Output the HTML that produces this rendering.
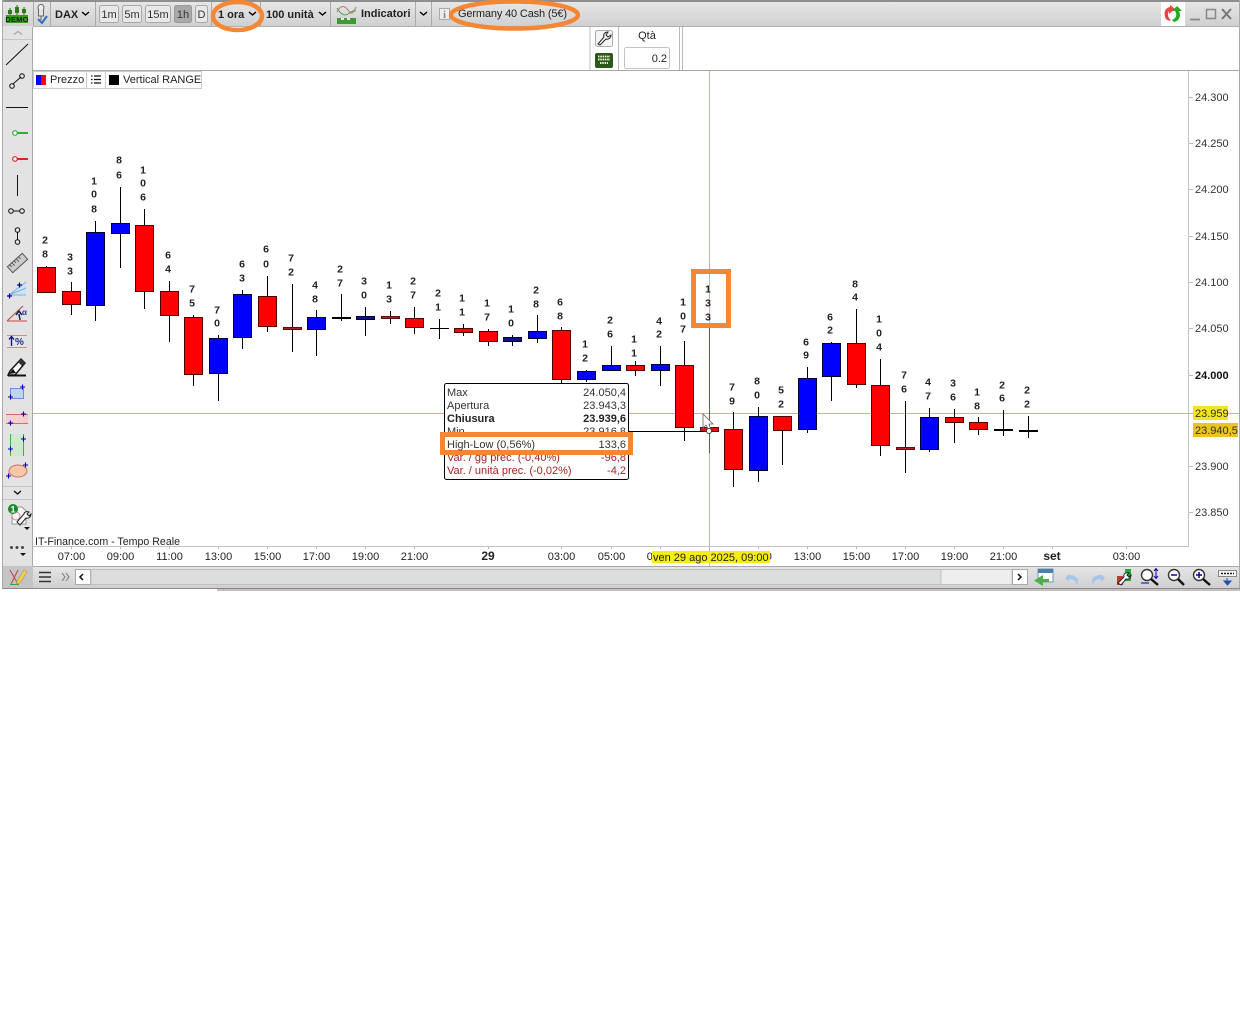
<!DOCTYPE html>
<html><head><meta charset="utf-8"><title>DAX</title>
<style>
html,body{margin:0;padding:0;background:#fff;width:1240px;height:1013px;overflow:hidden}
svg{display:block;font-family:"Liberation Sans",Arial,sans-serif;font-size:11px;fill:#222}
.b{font-weight:bold}
.w{stroke:#000;stroke-width:1;fill:none}
.R{fill:#f00;stroke:#500;stroke-width:1}
.B{fill:#00f;stroke:#003;stroke-width:1}
.F{fill:#a22;stroke:#511;stroke-width:1}
.N{fill:#118;stroke:#003;stroke-width:1}
.l text{font-size:10.5px;font-weight:bold;text-anchor:middle;fill:#222}
.t text{text-anchor:middle;fill:#222}
.p text{fill:#333}
.btn{fill:#e8e8e8;stroke:#a8a8a8}
.s{fill:none;stroke:#000}
</style></head><body>
<svg width="1240" height="1013" viewBox="0 0 1240 1013" xmlns="http://www.w3.org/2000/svg">
<defs>
<linearGradient id="g" x1="0" y1="0" x2="0" y2="1"><stop offset="0" stop-color="#e6e6e6"/><stop offset="1" stop-color="#cfd0d1"/></linearGradient>
</defs>
<rect width="1240" height="1013" fill="#fff"/>

<!-- bottom strip under window -->
<rect x="217" y="589" width="1023" height="2" fill="#c9bcbc"/>

<!-- chart area decorations -->
<path d="M33 70.5H1239" stroke="#aaa"/>
<path d="M1188.5 71V546M33 546.500H1189" stroke="#c4c4c4"/>
<line x1="33" y1="413.5" x2="1240" y2="413.5" stroke="#ee9f98" stroke-width="1"/>
<line x1="709.5" y1="71" x2="709.5" y2="566" stroke="#e5a79f" stroke-width="1"/>
<path d="M1189 97.5h4M1189 143.5h4M1189 189.5h4M1189 236.5h4M1189 282.5h4M1189 328.5h4M1189 375.5h4M1189 466.5h4M1189 512.5h4" stroke="#bbb"/>
<path d="M71.5 546v3M120.5 546v3M169.5 546v3M218.5 546v3M267.5 546v3M316.5 546v3M365.5 546v3M414.5 546v3M488.5 546v3M561.5 546v3M611.5 546v3M660.5 546v3M758.5 546v3M807.5 546v3M856.5 546v3M905.5 546v3M954.5 546v3M1003.5 546v3M1052.5 546v3M1126.5 546v3" stroke="#bbb"/>

<!-- wicks -->
<path class="w" d="M46.5 266V293M71.5 282V315M95.5 221V321M120.5 187V268M144.5 209V309M169.5 281V342M193.5 315V386M218.5 335V401M242.5 290V349M267.5 276V332M292.5 284V352M316.5 310V356M341.5 294V321M365.5 307V336M390.5 311V324M414.5 307V334M439.5 319V339M463.5 324V336M488.5 329V346M512.5 335V346M537.5 315V343M561.5 327V388M586.5 370V382M611.5 346V371M635.5 361V376M660.5 346V386M684.5 341V441M733.5 412V487M758.5 407V482M782.5 416V465M807.5 367V433M831.5 342V401M856.5 309V388M880.5 359V456M905.5 401V473M929.5 408V452M954.5 409V443M978.5 417V435M1003.5 410V436M1028.5 416V438"/>
<path d="M709.5 327V453" stroke="#8a4a4a"/>
<path d="M430 328.5H449" stroke="#000"/>

<!-- bodies -->
<rect class="R" x="37.5" y="267.5" width="18" height="25"/>
<rect class="R" x="62.5" y="291.5" width="18" height="13"/>
<rect class="B" x="86.5" y="232.5" width="18" height="73"/>
<rect class="B" x="111.5" y="223.5" width="18" height="10"/>
<rect class="R" x="135.5" y="225.5" width="18" height="66"/>
<rect class="R" x="160.5" y="291.5" width="18" height="24"/>
<rect class="R" x="184.5" y="317.5" width="18" height="57"/>
<rect class="B" x="209.5" y="338.5" width="18" height="35"/>
<rect class="B" x="233.5" y="294.5" width="18" height="43"/>
<rect class="R" x="258.5" y="296.5" width="18" height="30"/>
<rect class="F" x="283.5" y="327.5" width="18" height="2"/>
<rect class="B" x="307.5" y="317.5" width="18" height="12"/>
<rect x="332" y="317" width="19" height="2" fill="#000"/>
<rect class="N" x="356.5" y="316.5" width="18" height="3"/>
<rect class="F" x="381.5" y="316.5" width="18" height="2"/>
<rect class="R" x="405.5" y="318.5" width="18" height="9"/>
<rect class="R" x="454.5" y="328.5" width="18" height="4"/>
<rect class="R" x="479.5" y="331.5" width="18" height="10"/>
<rect class="N" x="503.5" y="337.5" width="18" height="4"/>
<rect class="B" x="528.5" y="331.5" width="18" height="7"/>
<rect class="R" x="552.5" y="330.5" width="18" height="49"/>
<rect class="B" x="577.5" y="371.5" width="18" height="8"/>
<rect class="B" x="602.5" y="365.5" width="18" height="5"/>
<rect class="R" x="626.5" y="365.5" width="18" height="5"/>
<rect class="B" x="651.5" y="364.5" width="18" height="6"/>
<rect class="R" x="675.5" y="365.5" width="18" height="62"/>
<rect class="F" x="700.5" y="427.5" width="18" height="4" style="fill:#d11"/>
<rect class="R" x="724.5" y="429.5" width="18" height="40"/>
<rect class="B" x="749.5" y="416.5" width="18" height="54"/>
<rect class="R" x="773.5" y="416.5" width="18" height="14"/>
<rect class="B" x="798.5" y="378.5" width="18" height="51"/>
<rect class="B" x="822.5" y="343.5" width="18" height="33"/>
<rect class="R" x="847.5" y="343.5" width="18" height="41"/>
<rect class="R" x="871.5" y="385.5" width="18" height="60"/>
<rect class="F" x="896.5" y="447.5" width="18" height="2"/>
<rect class="B" x="920.5" y="417.5" width="18" height="32"/>
<rect class="R" x="945.5" y="417.5" width="18" height="5"/>
<rect class="R" x="969.5" y="422.5" width="18" height="7"/>
<rect x="994" y="429" width="19" height="2" fill="#000"/>
<rect x="1019" y="430" width="19" height="2" fill="#000"/>

<!-- volume labels -->
<g class="l" transform="translate(0,-.7)">
<text x="45" y="244">2</text><text x="45" y="258">8</text>
<text x="70" y="261">3</text><text x="70" y="275">3</text>
<text x="94" y="185">1</text><text x="94" y="198">0</text><text x="94" y="213">8</text>
<text x="119" y="164">8</text><text x="119" y="179">6</text>
<text x="143" y="174">1</text><text x="143" y="187">0</text><text x="143" y="201">6</text>
<text x="168" y="259">6</text><text x="168" y="273">4</text>
<text x="192" y="293">7</text><text x="192" y="307">5</text>
<text x="217" y="314">7</text><text x="217" y="327">0</text>
<text x="242" y="268">6</text><text x="242" y="282">3</text>
<text x="266" y="253">6</text><text x="266" y="268">0</text>
<text x="291" y="262">7</text><text x="291" y="276">2</text>
<text x="315" y="289">4</text><text x="315" y="303">8</text>
<text x="340" y="273">2</text><text x="340" y="287">7</text>
<text x="364" y="285">3</text><text x="364" y="299">0</text>
<text x="389" y="289">1</text><text x="389" y="303">3</text>
<text x="413" y="285">2</text><text x="413" y="299">7</text>
<text x="438" y="297">2</text><text x="438" y="311">1</text>
<text x="462" y="302">1</text><text x="462" y="316">1</text>
<text x="487" y="307">1</text><text x="487" y="321">7</text>
<text x="511" y="313">1</text><text x="511" y="327">0</text>
<text x="536" y="294">2</text><text x="536" y="308">8</text>
<text x="560" y="306">6</text><text x="560" y="320">8</text>
<text x="585" y="348">1</text><text x="585" y="362">2</text>
<text x="610" y="324">2</text><text x="610" y="338">6</text>
<text x="634" y="343">1</text><text x="634" y="357">1</text>
<text x="659" y="325">4</text><text x="659" y="338">2</text>
<text x="683" y="306">1</text><text x="683" y="320">0</text><text x="683" y="333">7</text>
<text x="708" y="293">1</text><text x="708" y="307">3</text><text x="708" y="321">3</text>
<text x="732" y="391">7</text><text x="732" y="405">9</text>
<text x="757" y="385">8</text><text x="757" y="399">0</text>
<text x="781" y="394">5</text><text x="781" y="408">2</text>
<text x="806" y="346">6</text><text x="806" y="359">9</text>
<text x="830" y="321">6</text><text x="830" y="334">2</text>
<text x="855" y="288">8</text><text x="855" y="301">4</text>
<text x="879" y="323">1</text><text x="879" y="337">0</text><text x="879" y="351">4</text>
<text x="904" y="379">7</text><text x="904" y="393">6</text>
<text x="928" y="386">4</text><text x="928" y="400">7</text>
<text x="953" y="387">3</text><text x="953" y="401">6</text>
<text x="977" y="396">1</text><text x="977" y="410">8</text>
<text x="1002" y="389">2</text><text x="1002" y="402">6</text>
<text x="1027" y="394">2</text><text x="1027" y="408">2</text>
</g>

<!-- orange box around 133 -->
<rect x="693.5" y="271.5" width="35" height="54" fill="none" stroke="#f58634" stroke-width="5"/>

<!-- price axis -->
<g class="p">
<text x="1195" y="101">24.300</text><text x="1195" y="147">24.250</text><text x="1195" y="193">24.200</text>
<text x="1195" y="240">24.150</text><text x="1195" y="286">24.100</text><text x="1195" y="332">24.050</text>
<text x="1195" y="379" class="b" style="fill:#111">24.000</text><text x="1195" y="470">23.900</text><text x="1195" y="516">23.850</text>
</g>
<rect x="1193" y="406" width="35" height="14" fill="#f4e61c"/>
<text x="1195" y="417" fill="#333">23.959</text>
<rect x="1193" y="423" width="45" height="14" fill="#e9c51d"/>
<text x="1195" y="434" fill="#333">23.940,5</text>

<!-- time axis -->
<text x="35" y="545" fill="#222" textLength="145" lengthAdjust="spacingAndGlyphs">IT-Finance.com - Tempo Reale</text>
<g class="t">
<text x="71.5" y="560">07:00</text><text x="120.5" y="560">09:00</text><text x="169.5" y="560">11:00</text><text x="218.5" y="560">13:00</text>
<text x="267.5" y="560">15:00</text><text x="316.5" y="560">17:00</text><text x="365.5" y="560">19:00</text><text x="414.5" y="560">21:00</text>
<text x="488" y="560" class="b" style="font-size:12px">29</text><text x="561.5" y="560">03:00</text><text x="611.5" y="560">05:00</text><text x="660.5" y="560">07:00</text>
<text x="758.5" y="560">11:00</text><text x="807.5" y="560">13:00</text><text x="856.5" y="560">15:00</text><text x="905.5" y="560">17:00</text>
<text x="954.5" y="560">19:00</text><text x="1003.5" y="560">21:00</text><text x="1052" y="560" class="b" style="font-size:12px">set</text><text x="1126.5" y="560">03:00</text>
</g>
<rect x="652" y="551" width="118" height="12" fill="#f4ec14"/>
<text x="653" y="561" fill="#222">ven 29 ago 2025, 09:00</text>

<!-- tooltip -->
<path d="M628 431.5H704" stroke="#000"/>
<rect x="444.5" y="383.5" width="184" height="96" rx="2" fill="#fff" stroke="#000"/>
<text x="447" y="396" fill="#333">Max</text><text x="626" y="396" text-anchor="end" fill="#333">24.050,4</text>
<text x="447" y="409" fill="#333">Apertura</text><text x="626" y="409" text-anchor="end" fill="#333">23.943,3</text>
<text x="447" y="422" class="b">Chiusura</text><text x="626" y="422" text-anchor="end" class="b">23.939,6</text>
<text x="447" y="435" fill="#333">Min</text><text x="626" y="435" text-anchor="end" fill="#333">23.916,8</text>
<text x="447" y="461" style="fill:#a22">Var. / gg prec. (-0,40%)</text><text x="626" y="461" text-anchor="end" style="fill:#a22">-96,8</text>
<text x="447" y="474" style="fill:#a22">Var. / unità prec. (-0,02%)</text><text x="626" y="474" text-anchor="end" style="fill:#a22">-4,2</text>
<rect x="442.5" y="434.5" width="188" height="18" fill="#fff" stroke="#f58634" stroke-width="5"/>
<text x="447" y="448" fill="#333">High-Low (0,56%)</text><text x="626" y="448" text-anchor="end" fill="#333">133,6</text>

<!-- cursor -->
<path d="M703 414V428L706 425L709 431L711 430L709 424L713 424Z" fill="#fff" stroke="#666" stroke-width=".8"/>
<circle cx="709" cy="431" r="2.5" fill="#fff" stroke="#444"/>

<!-- legend -->
<rect x="33.5" y="71.5" width="168" height="17" fill="#fff" stroke="#ccc"/>
<path d="M86.5 71V88M105.5 71V88" stroke="#ccc"/>
<rect x="36" y="75" width="5" height="10" fill="#00f"/><rect x="41" y="75" width="5" height="10" fill="#f00"/>
<text x="50" y="83" fill="#222">Prezzo</text>
<path d="M94 76h7M94 79.5h7M94 83h7" stroke="#111" stroke-width="1.3"/>
<path d="M91 76h1.5M91 79.5h1.5M91 83h1.5" stroke="#111" stroke-width="1.3"/>
<rect x="109" y="75" width="10" height="10" fill="#000"/>
<text x="123" y="83" fill="#222">Vertical RANGE</text>

<!-- order panel -->
<path d="M590 27V70M618.5 27V70M679.5 27V70M682.5 27V70" stroke="#bbb"/>
<rect x="595.5" y="30.5" width="17" height="16" rx="2" fill="#f4f4f4" stroke="#aaa"/>
<path d="M598 44L604 37C603 34 605 32 608 32L606 35L608 37L611 35C611 38 608 40 606 39L600 45Z" fill="#fff" stroke="#222"/>
<rect x="595" y="53" width="18" height="15" rx="2" fill="#2b5a16"/>
<path d="M598 56.500h12M598 59.500h12M600 63h8" stroke="#fff" stroke-width="1.800" stroke-dasharray="1.500 .8"/>
<text x="647" y="39" text-anchor="middle" fill="#222">Qtà</text>
<rect x="624.5" y="47.5" width="45" height="21" rx="2" fill="#fff" stroke="#c4c4c4"/>
<text x="667" y="62" text-anchor="end" fill="#222">0.2</text>

<!-- top toolbar -->
<rect x="2" y="0" width="1238" height="2" fill="#8e8e8e"/>
<rect x="2" y="2" width="1238" height="24" fill="url(#g)"/>
<path d="M2 26.5H1240" stroke="#b0b0b0"/>
<path d="M33.5 2V26M50.5 2V26M95.5 2V26M211.5 2V26M260.5 2V26M330.5 2V26M415.5 2V26M431.5 2V26" stroke="#aaa"/>
<!-- demo icon -->
<rect x="6" y="15" width="22" height="8" fill="#3c9a1e"/>
<text x="17" y="22" text-anchor="middle" style="font-size:7.5px;font-weight:bold;letter-spacing:.2px;fill:#0d2a05">DEMO</text>
<path d="M10 8V15M17 5V15M24 7V15" stroke="#2a6a15"/>
<rect x="8" y="10" width="4" height="4" fill="#2e7a18"/><rect x="15" y="7" width="4" height="6" fill="#2e7a18"/><rect x="22" y="9" width="4" height="4" fill="#2e7a18"/>
<!-- pin -->
<circle cx="41" cy="7.500" r="3" fill="#eee" stroke="#666"/>
<path d="M38.500 9V16H43.500V9M41 16V20" fill="#e4e4e4" stroke="#666"/>
<path d="M38 19L42 23L47 16" fill="none" stroke="#2f6fc0" stroke-width="2"/>
<text x="55" y="18" class="b" style="fill:#222">DAX</text>
<path d="M82 12L85.500 15L89 12" class="s" stroke-width="1.4"/>
<rect class="btn" x="99.500" y="5.500" width="19" height="17" rx="2"/><text x="109" y="18" text-anchor="middle" fill="#333">1m</text>
<rect class="btn" x="122.500" y="5.500" width="19" height="17" rx="2"/><text x="132" y="18" text-anchor="middle" fill="#333">5m</text>
<rect class="btn" x="145.500" y="5.500" width="25" height="17" rx="2"/><text x="158" y="18" text-anchor="middle" fill="#333">15m</text>
<rect x="174.500" y="5.500" width="17" height="17" rx="2" fill="#a9a9a9" stroke="#999"/><text x="183" y="18" text-anchor="middle" fill="#333">1h</text>
<rect class="btn" x="195.500" y="5.500" width="12" height="17" rx="2"/><text x="201.500" y="18" text-anchor="middle" fill="#333">D</text>
<text x="218" y="18" class="b" style="fill:#222">1 ora</text>
<path d="M249 12L252.500 15L256 12" class="s" stroke-width="1.4"/>
<text x="266" y="18" class="b" style="fill:#222">100 unità</text>
<path d="M319 12L322.500 15L326 12" class="s" stroke-width="1.4"/>
<!-- indicator icon -->
<path d="M337 12C341 4 345 6 348 10C351 15 353 14 356 7" fill="none" stroke="#c87070"/>
<path d="M337 8C341 15 345 16 348 14C351 12 353 10 356 11" fill="none" stroke="#5a9a5a"/>
<rect x="337" y="18" width="19" height="6" fill="#3f9a2f"/>
<rect x="341" y="18" width="3" height="2" fill="#e8e8e8"/><rect x="347" y="18" width="3" height="2" fill="#e8e8e8"/>
<text x="361" y="17" class="b" style="fill:#222">Indicatori</text>
<path d="M420 12L423.500 15L427 12" class="s" stroke-width="1.4"/>
<rect x="439.500" y="8.500" width="10" height="11" fill="#eee" stroke="#aaa"/>
<text x="444.500" y="18" text-anchor="middle" class="b" style="font-family:'Liberation Serif',serif;fill:#888">i</text>
<text x="458" y="17" style="fill:#222" textLength="109">Germany 40 Cash (5€)</text>

<ellipse cx="237.500" cy="16" rx="24.500" ry="14" fill="none" stroke="#f58634" stroke-width="4.500"/>
<ellipse cx="514.500" cy="15" rx="63.500" ry="13.500" fill="none" stroke="#f58634" stroke-width="4.500"/>

<!-- window controls -->
<rect x="1161" y="2" width="24" height="24" fill="#fff"/>
<path d="M1170 7C1165 8 1163 13 1166 19C1168 21 1170 21 1171 20C1168 18 1167 14 1169 11V14L1175 9L1170 5Z" fill="#e44"/>
<path d="M1174 22C1180 21 1181 15 1179 11L1182 11L1177 6L1172 11H1175C1177 14 1177 18 1172 20Z" fill="#2a2"/>
<path d="M1190 19.500H1200" stroke="#888" stroke-width="1.800"/>
<rect x="1206.500" y="9.500" width="9" height="9" fill="none" stroke="#888" stroke-width="1.500"/>
<path d="M1222 9L1231 19M1231 9L1222 19" stroke="#777" stroke-width="2"/>

<!-- sidebar -->
<rect x="2" y="26" width="31" height="540" fill="#e3e3e3"/>
<path d="M2.500 0V588M32.500 27V566" stroke="#aaa"/>
<path d="M3 39.500H32M3 486.500H32M3 499.500H32" stroke="#c6c6c6"/>
<path d="M14 34.500L18 31.500L22 34.500" fill="none" stroke="#aaa" stroke-width="1.400"/>
<path d="M6 65L28 44" stroke="#111"/>
<path d="M13 84L21 77" stroke="#111"/><circle cx="12" cy="86" r="2.300" fill="none" stroke="#111"/><circle cx="22" cy="76" r="2.300" fill="none" stroke="#111"/>
<path d="M6 107.500H28" stroke="#111"/>
<circle cx="15" cy="133" r="2.300" fill="#fff" stroke="#3a3" stroke-width="1.200"/><path d="M17 133H28" stroke="#3a3" stroke-width="2"/>
<circle cx="15" cy="159" r="2.300" fill="#fff" stroke="#d22" stroke-width="1.200"/><path d="M17 159H28" stroke="#d22" stroke-width="2"/>
<path d="M17.500 175V196" stroke="#111"/>
<circle cx="11" cy="211" r="2.300" fill="none" stroke="#111"/><circle cx="22" cy="211" r="2.300" fill="none" stroke="#111"/><path d="M13 211H20" stroke="#111"/>
<circle cx="17.500" cy="230" r="2.300" fill="none" stroke="#111"/><circle cx="17.500" cy="242" r="2.300" fill="none" stroke="#111"/><path d="M17.500 232V240" stroke="#111"/>
<g transform="rotate(-42 17.500 263)"><rect x="7.500" y="259" width="20" height="8" fill="#ccc" stroke="#555"/><path d="M10.500 259v3M13.500 259v4M16.500 259v3M19.500 259v4M22.500 259v3" stroke="#555"/></g>
<path d="M9 295L26 282V295Z" fill="#cfe2f5"/><path d="M9 295L26 282M9 295L26 288M9 295H26" stroke="#7fb0e0"/>
<path d="M7 296h5M9.500 293.500v5M17 285h5M19.500 282.500v5" stroke="#00a" stroke-width="1.200"/>
<path d="M7 321L23 306M7 321H27" stroke="#c44" stroke-width="1.100" fill="none"/>
<path d="M20 320L19 314M16 315L19 311L22 315" fill="none" stroke="#125" stroke-width="1.500"/>
<text x="22" y="315" style="font-size:8px;fill:#33a;font-weight:bold">α</text>
<path d="M7 335.500H27M7 347.500H27" stroke="#d88"/>
<path d="M11.500 346V337M9 339.500L11.500 336.500L14 339.500" fill="none" stroke="#00a" stroke-width="1.300"/>
<text x="15" y="345" style="font-size:10px;font-weight:bold;fill:#238">%</text>
<path d="M10 371L21 359L25 363L15 375H8Z" fill="#fff" stroke="#111" stroke-width="1.400"/><path d="M18 362L22 366L25 363L21 359Z" fill="#333"/><path d="M8 375.500H26" stroke="#111" stroke-width="2"/><path d="M9 374L13 369L16 373Z" fill="#111"/>
<rect x="10.500" y="388.500" width="13" height="10" fill="#bfd3f2" stroke="#6c8fd4"/>
<path d="M8 397h5M10.500 394.500v5M20 387h5M22.500 384.500v5" stroke="#00a" stroke-width="1.100"/>
<rect x="6" y="414" width="22" height="10" fill="#f5cfcf"/><path d="M6 414.500H28M6 423.500H28" stroke="#d66"/>
<path d="M8 423h5M10.500 420.500v5M21 414h5M23.500 411.500v5" stroke="#00a" stroke-width="1.100"/>
<rect x="10" y="434" width="14" height="22" fill="#cfe9cf"/><path d="M10.500 434V456M23.500 434V456" stroke="#4a4"/>
<path d="M8 449h5M10.500 446.500v5M21 439h5M23.500 436.500v5" stroke="#00a" stroke-width="1.100"/>
<ellipse cx="18" cy="471" rx="9" ry="6" fill="#f6c8a8" stroke="#d66"/>
<path d="M6 476h5M8.500 473.500v5M23 465h5M25.500 462.500v5" stroke="#00a" stroke-width="1.100"/>
<path d="M14 491L17.500 494L21 491" fill="none" stroke="#111" stroke-width="1.400"/>
<path d="M12 507H22L26 511V524H12Z" fill="#f6f6f6" stroke="#999"/>
<circle cx="16" cy="516" r="4" fill="none" stroke="#d88"/>
<path d="M17 522L24 514C24 512 27 511 29 512L27 514L29 516L31 514C31 517 28 519 26 518L20 525Z" fill="#fff" stroke="#222"/>
<circle cx="13" cy="509" r="5" fill="#1a8a2a"/>
<text x="13" y="512.500" text-anchor="middle" style="font-size:9px;font-weight:bold;fill:#fff">1</text>
<path d="M24 527h6l-3 3Z" fill="#111"/>
<circle cx="11.500" cy="547.500" r="1.500" fill="#444"/><circle cx="17" cy="547.500" r="1.500" fill="#444"/><circle cx="22.500" cy="547.500" r="1.500" fill="#444"/>
<path d="M20 553h6l-3 3Z" fill="#111"/>

<!-- bottom bar -->
<rect x="33" y="566" width="1207" height="22" fill="url(#g)"/>
<path d="M33 566.500H1240" stroke="#a8a8a8"/>
<rect x="3" y="566" width="30" height="22" fill="#c4c4c4"/>
<path d="M2 588.500H1240" stroke="#8a8a8a"/>
<path d="M10 570L18 584M18 570L11 584" stroke="#b44" fill="none"/>
<path d="M10 584.500H19" stroke="#3a3"/>
<path d="M17 581L24 570L27 572L20 583L16 584Z" fill="#f2d23c" stroke="#a88" stroke-width=".6"/>
<path d="M39 572.500H51M39 577H51M39 581.500H51" stroke="#333" stroke-width="1.600"/>
<path d="M62 573L65 577L62 581M66 573L69 577L66 581" fill="none" stroke="#777"/>
<rect x="75.500" y="569.500" width="15" height="15" fill="#fff" stroke="#aaa"/>
<path d="M83 574L80 577L83 580" fill="none" stroke="#111" stroke-width="1.500"/>
<rect x="91" y="569.500" width="850" height="15" fill="#dcdddd" stroke="#c0c0c0"/>
<rect x="941" y="569.500" width="71" height="15" fill="#eee" stroke="#c0c0c0"/>
<rect x="1012.500" y="569.500" width="15" height="15" fill="#fff" stroke="#aaa"/>
<path d="M1018 574L1021 577L1018 580" fill="none" stroke="#111" stroke-width="1.500"/>
<!-- bottom icons -->
<rect x="1038" y="569" width="15" height="13" fill="#fff" stroke="#6a9ac4"/><rect x="1038" y="569" width="15" height="4" fill="#4a7fb0"/>
<path d="M1043 575V579H1049V582H1043V586L1034 580.500Z" fill="#4fb03f"/>
<path d="M1069 574L1065 578L1069 582V579C1074 579 1076 581 1077 585C1080 579 1076 575 1069 575Z" fill="#a8c4e8"/>
<path d="M1101 574L1105 578L1101 582V579C1096 579 1094 581 1093 585C1090 579 1094 575 1101 575Z" fill="#a8c4e8"/>
<rect x="1117" y="576" width="6" height="9" fill="#c33"/><rect x="1125" y="569" width="6" height="12" fill="#2a3"/>
<path d="M1118 583L1124 577C1123 574 1126 572 1129 573L1127 575L1129 577L1131 575C1131 578 1128 580 1126 579L1121 585Z" fill="#fff" stroke="#222"/>
<circle cx="1147" cy="575" r="5.500" fill="#fff" stroke="#333" stroke-width="1.400"/><path d="M1151 579L1158 585" stroke="#111" stroke-width="2.400"/>
<path d="M1156 569V578M1154 571L1156 568.500L1158 571M1154 576L1156 578.500L1158 576M1141 583H1149" stroke="#00a" fill="none"/>
<circle cx="1174" cy="575" r="5.500" fill="#fff" stroke="#333" stroke-width="1.400"/><path d="M1178 579L1184 585" stroke="#111" stroke-width="2.400"/><path d="M1171 575H1177" stroke="#00a" stroke-width="1.500"/>
<circle cx="1199" cy="575" r="5.500" fill="#fff" stroke="#333" stroke-width="1.400"/><path d="M1203 579L1210 585" stroke="#111" stroke-width="2.400"/><path d="M1196 575H1202M1199 572V578" stroke="#00a" stroke-width="1.500"/>
<rect x="1218.500" y="570.500" width="18" height="6" fill="#f4f4f4" stroke="#888"/><path d="M1221 573.500h13" stroke="#222" stroke-width="1.500" stroke-dasharray="2 1"/>
<path d="M1227 578V582M1224 581L1227.500 585L1231 581Z" fill="#1f4fb0" stroke="#1f4fb0"/>
<path d="M1239.500 0V588" stroke="#aaa"/>
</svg>
</body></html>
